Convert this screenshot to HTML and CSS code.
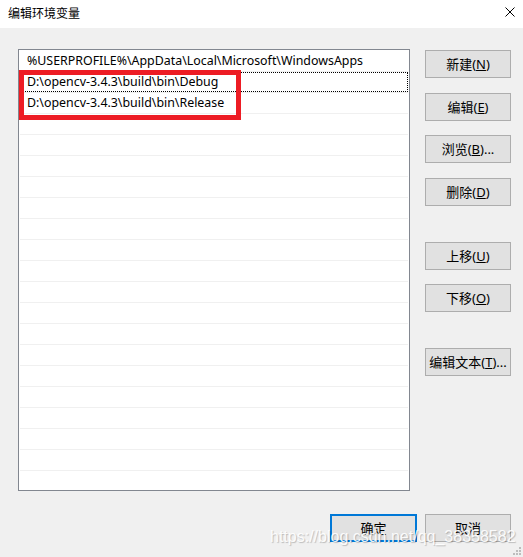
FILE: index.html
```html
<!DOCTYPE html>
<html lang="zh-CN">
<head>
<meta charset="utf-8">
<title>编辑环境变量</title>
<link rel="stylesheet" href="styles.css">
</head>
<body>
<div class="dialog">
  <div class="titlebar">
    <span class="title">编辑环境变量</span>
    <svg class="close" width="10" height="10" viewBox="0 0 10 10"><path d="M0.5 0.5 L9.5 9.5 M9.5 0.5 L0.5 9.5" stroke="#000" stroke-width="1"/></svg>
  </div>
  <div class="main">
    <div class="listbox">
      <div class="row">%USERPROFILE%\AppData\Local\Microsoft\WindowsApps</div>
      <div class="row focus">D:\opencv-3.4.3\build\bin\Debug</div>
      <div class="row">D:\opencv-3.4.3\build\bin\Release</div>
      <div class="row"></div><div class="row"></div><div class="row"></div><div class="row"></div>
      <div class="row"></div><div class="row"></div><div class="row"></div><div class="row"></div>
      <div class="row"></div><div class="row"></div><div class="row"></div><div class="row"></div>
      <div class="row"></div><div class="row"></div><div class="row"></div><div class="row"></div>
      <div class="row"></div><div class="row"></div>
      <div class="mark"></div>
    </div>
    <div class="side">
      <button class="btn">新建(<u>N</u>)</button>
      <button class="btn g15">编辑(<u>E</u>)</button>
      <button class="btn g14">浏览(<u>B</u>)...</button>
      <button class="btn g15">删除(<u>D</u>)</button>
      <button class="btn g36">上移(<u>U</u>)</button>
      <button class="btn g14">下移(<u>O</u>)</button>
      <button class="btn g36">编辑文本(<u>T</u>)...</button>
    </div>
  </div>
  <div class="footer">
    <button class="btn ok">确定</button>
    <button class="btn">取消</button>
  </div>
  <div class="watermark">https://blog.csdn.net/qq_38358582</div>
  <svg class="grip" width="9" height="9" viewBox="0 0 9 9">
    <rect x="6" y="0" width="2" height="2" fill="#bdbdbd"/>
    <rect x="3" y="3" width="2" height="2" fill="#bdbdbd"/>
    <rect x="6" y="3" width="2" height="2" fill="#bdbdbd"/>
    <rect x="0" y="6" width="2" height="2" fill="#bdbdbd"/>
    <rect x="3" y="6" width="2" height="2" fill="#bdbdbd"/>
    <rect x="6" y="6" width="2" height="2" fill="#bdbdbd"/>
  </svg>
</div>
</body>
</html>
```
FILE: styles.css
```css
html, body {
  margin: 0;
  padding: 0;
}
body {
  width: 523px;
  height: 557px;
  overflow: hidden;
  background: #f0f0f0;
  font-family: "Noto Sans", "Noto Sans CJK SC", sans-serif;
  color: #000;
}
.dialog {
  position: relative;
  width: 523px;
  height: 557px;
  background: #f0f0f0;
}
.titlebar {
  height: 28px;
  background: #fff;
  display: flex;
  align-items: center;
  justify-content: space-between;
  padding: 0 8px;
}
.title {
  font-family: "Noto Sans CJK SC", sans-serif;
  font-size: 12px;
  line-height: 16px;
  margin-top: -2px;
}
.close {
  display: block;
  margin-top: -4px;
}
.main {
  display: flex;
  gap: 15px;
  padding: 21px 0 0 18px;
}
.listbox {
  position: relative;
  box-sizing: border-box;
  width: 392px;
  height: 442px;
  border: 1px solid #828790;
  background: #fff;
  padding-top: 1px;
  overflow: hidden;
}
.row {
  position: relative;
  height: 20px;
  margin: 0 1px;
  border-bottom: 1px solid #f0f0f0;
  padding-left: 7px;
  font-size: 12.4px;
  line-height: 20px;
  white-space: nowrap;
}
.row.focus::after {
  content: "";
  position: absolute;
  inset: 0;
  border: 1px dotted #000;
}
.mark {
  position: absolute;
  left: 0;
  top: 20px;
  width: 222px;
  height: 50px;
  box-sizing: border-box;
  border: 5px solid #ed1c24;
}
.side {
  display: flex;
  flex-direction: column;
  padding-top: 1px;
}
.btn {
  box-sizing: border-box;
  width: 86px;
  height: 28px;
  background: #e1e1e1;
  border: 1px solid #adadad;
  font-family: "Noto Sans", "Noto Sans CJK SC", sans-serif;
  font-size: 13px;
  color: #000;
  padding: 0;
  line-height: 1;
}
.g14 { margin-top: 14px; }
.g15 { margin-top: 15px; }
.g36 { margin-top: 36px; }
.footer {
  display: flex;
  justify-content: flex-end;
  gap: 8px;
  padding: 23px 12px 0 0;
}
.btn.ok {
  width: 87px;
  border: 2px solid #0078d7;
}
.watermark {
  position: absolute;
  left: 270px;
  top: 528px;
  font-family: "Liberation Sans", Arial, sans-serif;
  font-size: 16px;
  color: rgba(255, 255, 255, 0.92);
  text-shadow: 1px 1px 1px rgba(0, 0, 0, 0.22);
  white-space: nowrap;
}
.grip {
  position: absolute;
  right: 1px;
  bottom: 1px;
}
```
